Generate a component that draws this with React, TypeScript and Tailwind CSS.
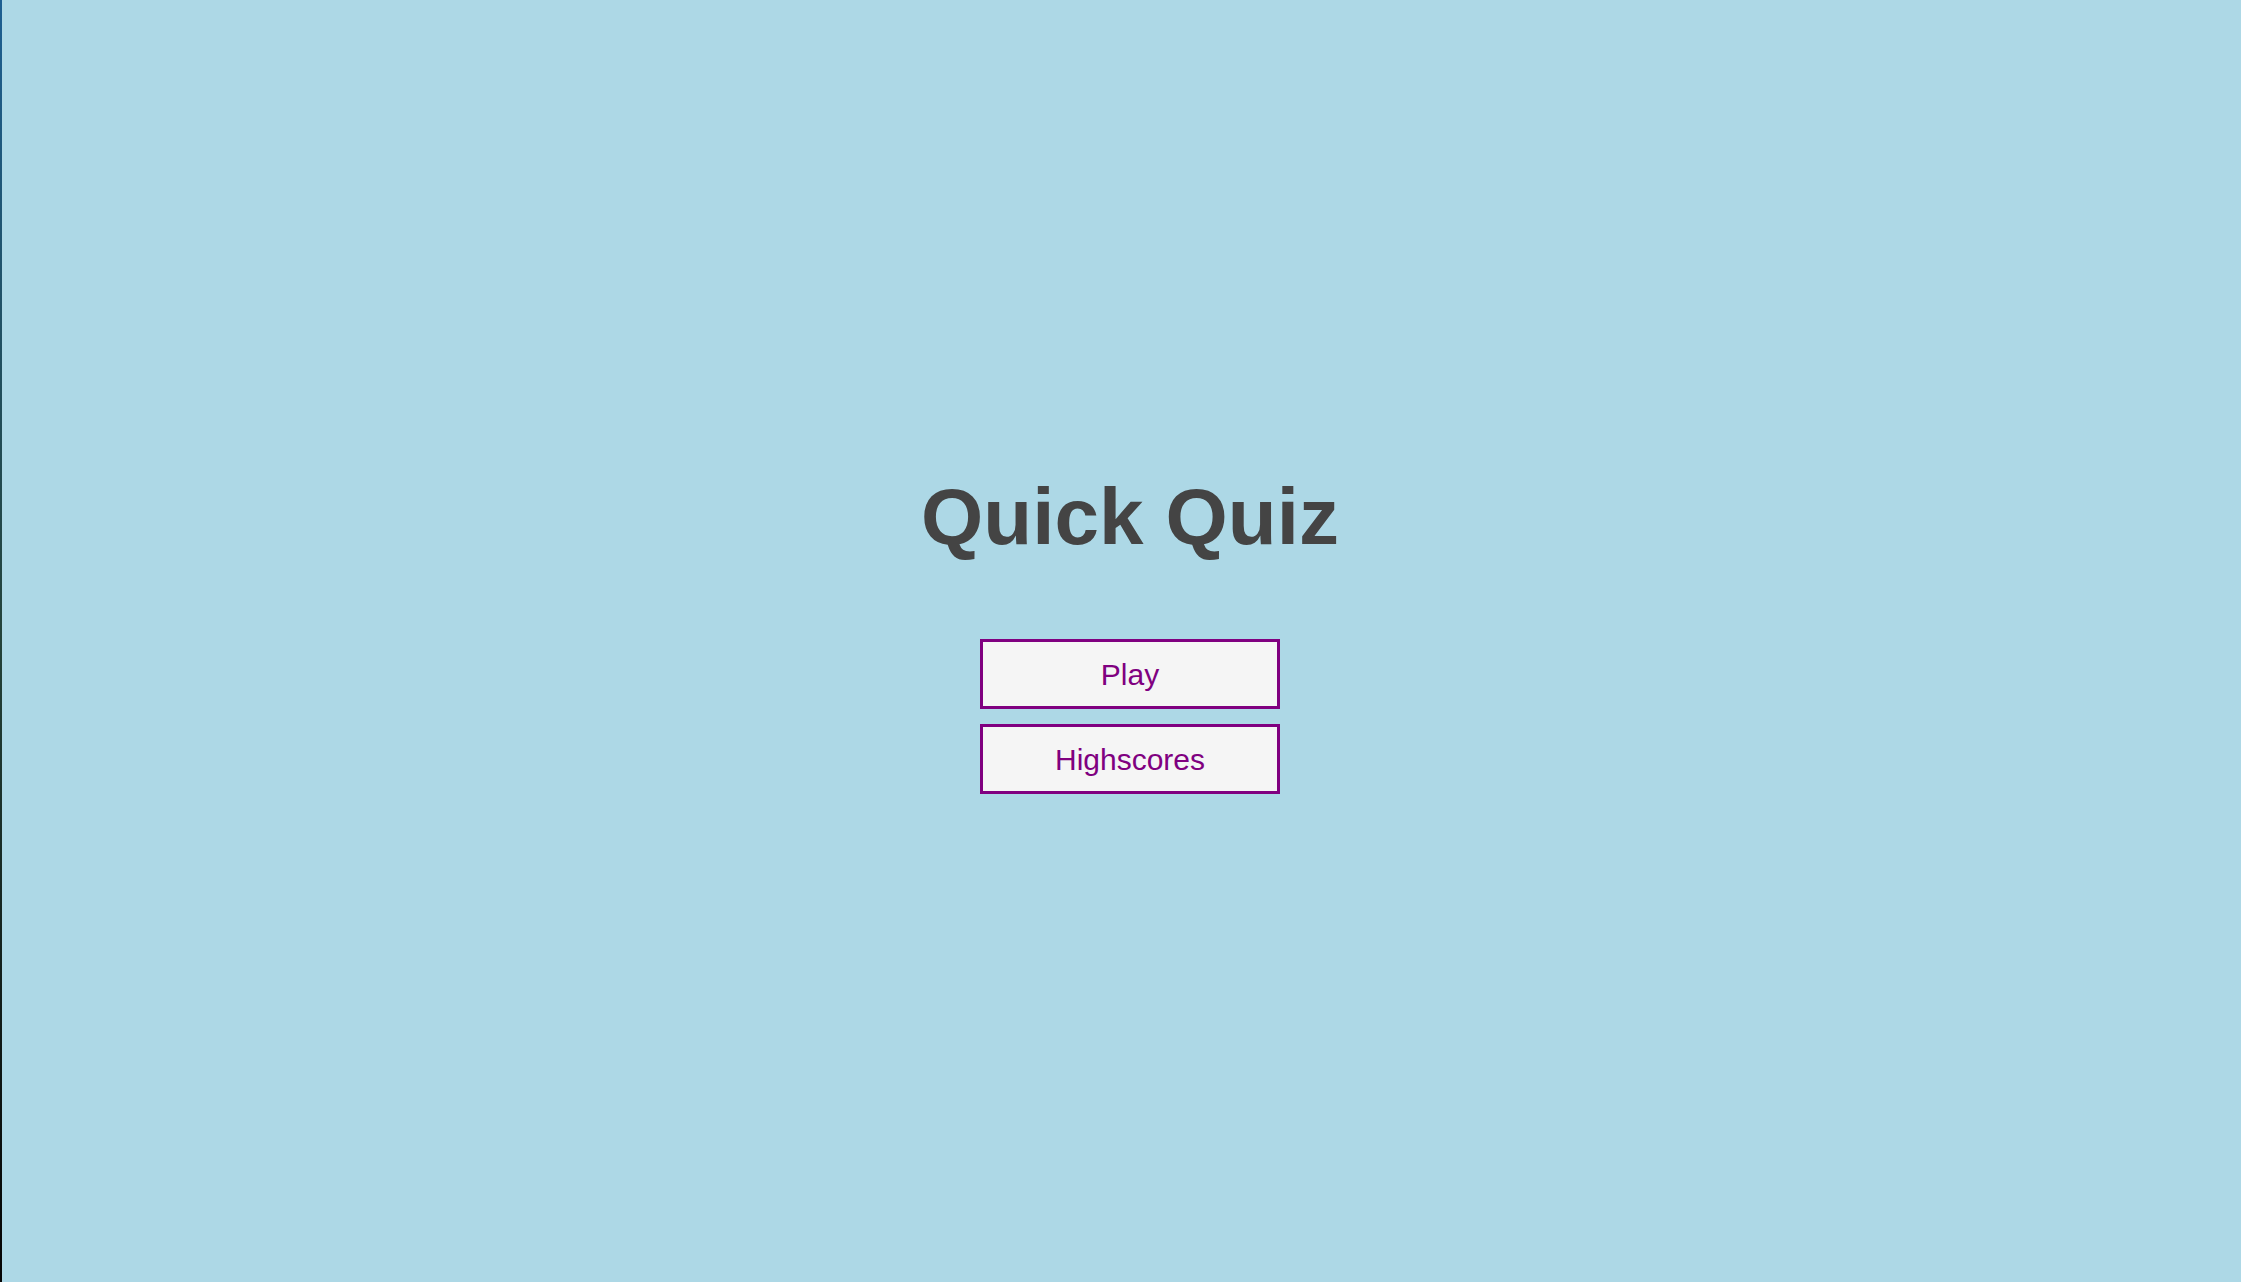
export default function App() {
  return (
    <div className="flex min-h-screen w-full bg-[#add8e6] font-['Liberation_Sans',Arial,sans-serif]">
      <div className="w-[2px] shrink-0 bg-gradient-to-b from-[#1d5f92] via-[#24433a] to-[#050505]" />
      <main className="flex flex-1 flex-col items-center justify-center pb-[11px] pl-[17px]">
        <h1 className="text-[80px] font-bold leading-none text-[#444444]">Quick Quiz</h1>
        <div className="mt-[82px] flex flex-col gap-[15px]">
          <button className="h-[70px] w-[300px] border-[3px] border-[#800080] bg-[#f5f5f5] pt-[1px] text-[30px] text-[#800080]">
            Play
          </button>
          <button className="h-[70px] w-[300px] border-[3px] border-[#800080] bg-[#f5f5f5] pt-[1px] text-[30px] text-[#800080]">
            Highscores
          </button>
        </div>
      </main>
    </div>
  );
}
